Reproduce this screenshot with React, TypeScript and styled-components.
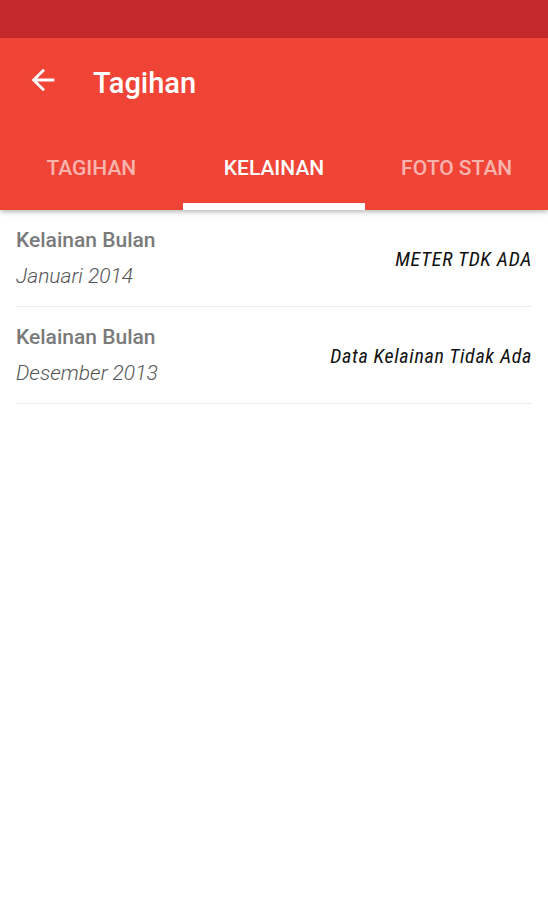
import React from "react";
import styled, { createGlobalStyle } from "styled-components";

const Global = createGlobalStyle`
  html, body { margin: 0; padding: 0; background: #ffffff; }
  body { font-family: Roboto, "Noto Sans", sans-serif; -webkit-font-smoothing: antialiased; }
  * { box-sizing: border-box; }
`;

const Page = styled.div`
  width: 548px;
  min-height: 900px;
  background: #ffffff;
  display: flex;
  flex-direction: column;
`;

const StatusBar = styled.div`
  height: 38px;
  background: #c4282c;
`;

const Header = styled.header`
  background: #f04437;
  box-shadow: 0 2px 5px rgba(0, 0, 0, 0.28);
  position: relative;
  z-index: 1;
`;

const Toolbar = styled.div`
  height: 88px;
  display: flex;
  align-items: center;
  padding-left: 26px;
  gap: 33px;
`;

const BackButton = styled.div`
  width: 34px;
  height: 34px;
  display: flex;
  align-items: center;
  justify-content: center;
  margin-top: -4px;
`;

const Title = styled.h1`
  margin: 0;
  margin-top: 1px;
  font-family: Roboto, sans-serif;
  font-weight: 500;
  font-size: 29px;
  color: #ffffff;
  letter-spacing: 0;
`;

const TabBar = styled.nav`
  height: 84px;
  display: grid;
  grid-template-columns: repeat(3, 1fr);
`;

const Tab = styled.div<{ $active?: boolean }>`
  position: relative;
  display: flex;
  align-items: center;
  justify-content: center;
  font-family: Roboto, sans-serif;
  font-weight: 500;
  font-size: 21px;
  color: ${(p) => (p.$active ? "#ffffff" : "rgba(255,255,255,0.62)")};
  &::after {
    content: "";
    display: ${(p) => (p.$active ? "block" : "none")};
    position: absolute;
    left: 0;
    right: 0;
    bottom: 0;
    height: 7px;
    background: #ffffff;
  }
`;

const List = styled.div`
  display: flex;
  flex-direction: column;
  padding: 0 16px;
`;

const Row = styled.div`
  display: flex;
  align-items: center;
  justify-content: space-between;
  padding: 12px 0 12px;
  border-bottom: 1px solid #ececec;
`;

const LeftCol = styled.div`
  display: flex;
  flex-direction: column;
`;

const Label = styled.div`
  font-family: Roboto, sans-serif;
  font-weight: 500;
  font-size: 21px;
  line-height: 36px;
  color: #7a7a7a;
`;

const DateText = styled.div`
  font-family: Roboto, sans-serif;
  font-weight: 300;
  font-style: italic;
  font-size: 21px;
  line-height: 36px;
  color: #555555;
`;

const Status = styled.div`
  font-family: "Roboto Condensed", Roboto, sans-serif;
  font-stretch: condensed;
  font-style: italic;
  font-weight: 400;
  font-size: 20px;
  letter-spacing: 0.65px;
  color: #111111;
  padding-top: 2px;
`;

const ArrowIcon = () => (
  <svg width="34" height="34" viewBox="0 0 24 24" fill="#ffffff">
    <path d="M20 11H7.83l5.59-5.59L12 4l-8 8 8 8 1.41-1.41L7.83 13H20v-2z" />
  </svg>
);

const rows = [
  { month: "Januari 2014", status: "METER TDK ADA" },
  { month: "Desember 2013", status: "Data Kelainan Tidak Ada" },
];

export default function App() {
  return (
    <Page>
      <Global />
      <Header>
        <StatusBar />
        <Toolbar>
          <BackButton>
            <ArrowIcon />
          </BackButton>
          <Title>Tagihan</Title>
        </Toolbar>
        <TabBar>
          <Tab>TAGIHAN</Tab>
          <Tab $active>KELAINAN</Tab>
          <Tab>FOTO STAN</Tab>
        </TabBar>
      </Header>
      <List>
        {rows.map((r) => (
          <Row key={r.month}>
            <LeftCol>
              <Label>Kelainan Bulan</Label>
              <DateText>{r.month}</DateText>
            </LeftCol>
            <Status>{r.status}</Status>
          </Row>
        ))}
      </List>
    </Page>
  );
}
